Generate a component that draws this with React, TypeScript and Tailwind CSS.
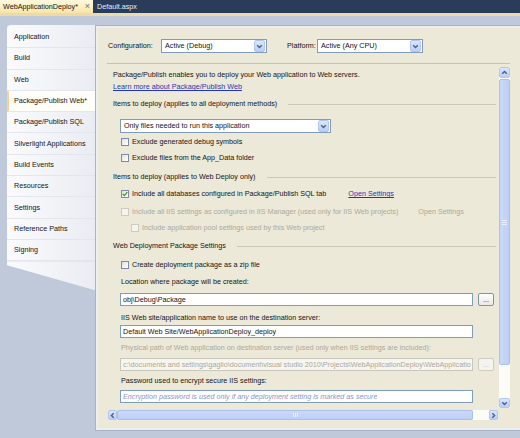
import React from 'react'

// ─── Data ─────────────────────────────────────────────────────────────────────

const PAGES = [
  'Application',
  'Build',
  'Web',
  'Package/Publish Web*',
  'Package/Publish SQL',
  'Silverlight Applications',
  'Build Events',
  'Resources',
  'Settings',
  'Reference Paths',
  'Signing',
]

const ACTIVE_PAGE = 'Package/Publish Web*'

// ─── Small XP-ish controls ────────────────────────────────────────────────────

type Dir = 'up' | 'down' | 'left' | 'right'

const ROT: Record<Dir, string> = {
  up: 'rotate-180',
  down: '',
  left: 'rotate-90',
  right: '-rotate-90',
}

function Chevron({ dir }: { dir: Dir }) {
  return (
    <svg width="7" height="7" viewBox="0 0 7 7" className={ROT[dir]}>
      <path d="M1.2 2.3 L3.5 4.6 L5.8 2.3" fill="none" stroke="#4a5f8c" strokeWidth="1.4" />
    </svg>
  )
}

function ArrowBtn({ dir, className = '' }: { dir: Dir; className?: string }) {
  return (
    <div
      className={`rounded-[2px] border border-[#b3c6ef] bg-linear-to-b from-[#dbe6fe] to-[#b9cdf7] flex items-center justify-center shrink-0 ${className}`}
    >
      <Chevron dir={dir} />
    </div>
  )
}

function Select({ value, width }: { value: string; width: string }) {
  return (
    <div className={`h-[14px] bg-white border border-[#7f9db9] flex items-center shrink-0 ${width}`}>
      <span className="flex-1 pl-[3px] whitespace-nowrap overflow-hidden">{value}</span>
      <ArrowBtn dir="down" className="w-[11px] h-[12px] mr-px" />
    </div>
  )
}

function Checkbox({ checked, disabled }: { checked?: boolean; disabled?: boolean }) {
  return (
    <span
      className={`w-[8px] h-[8px] border flex items-center justify-center shrink-0 ${
        disabled ? 'border-[#cdcbbf] bg-[#f5f4ee]' : 'border-[#7b8ca6] bg-linear-to-br from-[#e2e2dc] to-white'
      }`}
    >
      {checked && (
        <svg width="6" height="6" viewBox="0 0 6 6">
          <path d="M0.7 2.9 L2.4 4.6 L5.3 1.2" stroke="#22a022" strokeWidth="1.3" fill="none" />
        </svg>
      )}
    </span>
  )
}

function GroupHeader({ label, className = '' }: { label: string; className?: string }) {
  return (
    <div className={`flex items-center h-[12px] pl-[6px] ${className}`}>
      <span className="whitespace-nowrap">{label}</span>
      <div className="flex-1 ml-[11px] mr-[3px] h-px bg-[#cac7b7]" />
    </div>
  )
}

function DotsButton({ disabled }: { disabled?: boolean }) {
  return (
    <div
      className={`ml-[5px] w-[16px] h-[13px] rounded-[2px] border flex items-center justify-center leading-none shrink-0 ${
        disabled
          ? 'border-[#cfcdc1] bg-[#f4f3ee] text-[#c2bfb2]'
          : 'border-[#8292ad] bg-linear-to-b from-white to-[#e9e8e2] text-[#222]'
      }`}
    >
      ...
    </div>
  )
}

function TextBox({ value, disabled, placeholder }: { value: string; disabled?: boolean; placeholder?: boolean }) {
  return (
    <div
      className={`w-[353px] h-[13px] border flex items-center pl-[2px] whitespace-nowrap overflow-hidden shrink-0 ${
        disabled ? 'border-[#c9c7ba] bg-[#f6f5ef] text-[#aca899]' : 'border-[#7f9db9] bg-white'
      } ${placeholder ? 'italic text-[#8d94c4]' : ''}`}
    >
      <span className="overflow-hidden">{value}</span>
    </div>
  )
}

// ─── Sidebar ──────────────────────────────────────────────────────────────────

function Sidebar() {
  return (
    <div className="w-[88px] flex flex-col shrink-0">
      <div className="pt-[2px] rounded-tl-[4px] bg-linear-to-r from-[#fbfbfc] to-[#e9ecf2]">
        {PAGES.map((p) => {
          const active = p === ACTIVE_PAGE
          return (
            <div
              key={p}
              className={`h-[21.3px] flex items-center border-b border-[#e3e6ec] whitespace-nowrap ${
                active ? 'bg-[#fffdf7] border-l-2 border-l-[#f3d397] pl-[5px]' : 'pl-[7px]'
              }`}
            >
              {p}
            </div>
          )
        })}
      </div>
      <div className="h-[29px] bg-linear-to-r from-[#fbfbfc] to-[#e9ecf2] [clip-path:polygon(0_0,100%_0,100%_100%,0_14%)]" />
    </div>
  )
}

// ─── Scrollbars ───────────────────────────────────────────────────────────────

function VScroll() {
  return (
    <div className="w-[11px] h-[341px] flex flex-col bg-[#fbfbf7]">
      <ArrowBtn dir="up" className="w-[11px] h-[11px]" />
      <div className="mt-px h-[286px] rounded-[2px] border border-[#a9bfee] bg-linear-to-r from-[#cbd9f9] to-[#bccff6] flex flex-col items-center justify-center gap-px">
        <div className="w-[5px] h-px bg-[#e8eefc]" />
        <div className="w-[5px] h-px bg-[#e8eefc]" />
        <div className="w-[5px] h-px bg-[#e8eefc]" />
      </div>
      <div className="flex-1" />
      <ArrowBtn dir="down" className="w-[11px] h-[10px]" />
    </div>
  )
}

function HScroll() {
  return (
    <div className="h-[10px] flex items-stretch mt-px">
      <ArrowBtn dir="left" className="ml-px w-[9px]" />
      <div className="w-[356px] rounded-[2px] border border-[#a9bfee] bg-linear-to-b from-[#cbd9f9] to-[#bccff6] flex items-center justify-center gap-px">
        <div className="w-px h-[4px] bg-[#e8eefc]" />
        <div className="w-px h-[4px] bg-[#e8eefc]" />
        <div className="w-px h-[4px] bg-[#e8eefc]" />
      </div>
      <div className="flex-1 bg-[#fbfbf7]" />
      <ArrowBtn dir="right" className="w-[9px] mr-px" />
    </div>
  )
}

// ─── Main page ────────────────────────────────────────────────────────────────

function PublishPage() {
  return (
    <div className="w-[429px] h-[406px] border border-[#a9b3c5] shrink-0">
      <div className="h-full border-2 border-[#eceef2] bg-[#ece9d8] pl-[9px] pr-[11px] pt-[11px]">
        {/* Configuration / Platform */}
        <div className="h-[14px] flex items-center whitespace-nowrap">
          <span className="w-[54px] pl-px shrink-0">Configuration:</span>
          <Select value="Active (Debug)" width="w-[106px]" />
          <span className="ml-[20px] w-[30px] shrink-0">Platform:</span>
          <Select value="Active (Any CPU)" width="w-[106px]" />
        </div>
        <div className="mt-[10px] h-px bg-[#c6c3b3]" />

        {/* Scrolling property area */}
        <div className="mt-[3px] flex h-[353px]">
          <div className="flex-1 flex flex-col min-w-0">
            <div className="h-[342px] overflow-hidden pt-[2px]">
              <div className="h-[12px] pl-[6px] whitespace-nowrap">
                Package/Publish enables you to deploy your Web application to Web servers.
              </div>
              <div className="h-[12px] pl-[6px] whitespace-nowrap">
                <span className="text-[#2336b8] underline">Learn more about Package/Publish Web</span>
              </div>

              <GroupHeader label="Items to deploy (applies to all deployment methods)" className="mt-[5px]" />
              <div className="mt-[9px] ml-[13px]">
                <Select value="Only files needed to run this application" width="w-[211px]" />
              </div>
              <div className="mt-[3px] ml-[14px] h-[12px] flex items-center gap-[3px]">
                <Checkbox />
                <span>Exclude generated debug symbols</span>
              </div>
              <div className="mt-[4px] ml-[14px] h-[12px] flex items-center gap-[3px]">
                <Checkbox />
                <span>Exclude files from the App_Data folder</span>
              </div>

              <GroupHeader label="Items to deploy (applies to Web Deploy only)" className="mt-[7px]" />
              <div className="mt-[5px] ml-[14px] h-[12px] flex items-center gap-[3px] whitespace-nowrap">
                <Checkbox checked />
                <span>Include all databases configured in Package/Publish SQL tab</span>
                <span className="ml-[19px] text-[#2336b8] underline">Open Settings</span>
              </div>
              <div className="mt-[6px] ml-[14px] h-[12px] flex items-center gap-[3px] whitespace-nowrap text-[#aca899]">
                <Checkbox disabled />
                <span>Include all IIS settings as configured in IIS Manager (used only for IIS Web projects)</span>
                <span className="ml-[17px]">Open Settings</span>
              </div>
              <div className="mt-[4px] ml-[24px] h-[12px] flex items-center gap-[3px] whitespace-nowrap text-[#aca899]">
                <Checkbox disabled />
                <span>Include application pool settings used by this Web project</span>
              </div>

              <GroupHeader label="Web Deployment Package Settings" className="mt-[6px]" />
              <div className="mt-[7px] ml-[14px] h-[12px] flex items-center gap-[3px]">
                <Checkbox />
                <span>Create deployment package as a zip file</span>
              </div>
              <div className="mt-[5px] ml-[14px] h-[12px]">Location where package will be created:</div>
              <div className="mt-[5px] ml-[13px] flex items-center">
                <TextBox value="obj\Debug\Package" />
                <DotsButton />
              </div>
              <div className="mt-[6px] ml-[14px] h-[12px]">IIS Web site/application name to use on the destination server:</div>
              <div className="mt-px ml-[13px] flex items-center">
                <TextBox value="Default Web Site/WebApplicationDeploy_deploy" />
              </div>
              <div className="mt-[4px] ml-[14px] h-[12px] whitespace-nowrap text-[#aca899]">
                Physical path of Web application on destination server (used only when IIS settings are included):
              </div>
              <div className="mt-[4px] ml-[13px] flex items-center">
                <TextBox
                  disabled
                  value="c:\documents and settings\gaglio\document\visual studio 2010\Projects\WebApplicationDeploy\WebApplicatio"
                />
                <DotsButton disabled />
              </div>
              <div className="mt-[4px] ml-[14px] h-[12px]">Password used to encrypt secure IIS settings:</div>
              <div className="mt-[3px] ml-[13px] flex items-center">
                <TextBox placeholder value="Encryption password is used only if any deployment setting is marked as secure" />
              </div>
            </div>
            <HScroll />
          </div>
          <VScroll />
        </div>
      </div>
    </div>
  )
}

// ─── App ──────────────────────────────────────────────────────────────────────

export default function App() {
  return (
    <div className="w-[520px] h-[438px] overflow-hidden bg-[#bfc9da] font-['Liberation_Sans',Arial,sans-serif] text-[7.2px] leading-[12px] text-[#141414]">
      {/* Document tabs */}
      <div className="h-[13px] bg-[#2b3c5a] flex items-stretch">
        <div className="w-[93px] bg-linear-to-b from-[#fff9de] to-[#f9e5a6] flex items-center pl-[3px] whitespace-nowrap">
          <span>WebApplicationDeploy*</span>
          <span className="ml-auto mr-[3px] text-[#707070] text-[9px] leading-none">×</span>
        </div>
        <div className="ml-[4px] flex items-center text-[#e9edf5]">Default.aspx</div>
      </div>
      <div className="h-[3px] bg-[#eadba9]" />

      {/* Property pages */}
      <div className="flex pl-[7px] pt-[9px]">
        <Sidebar />
        <PublishPage />
      </div>
    </div>
  )
}
